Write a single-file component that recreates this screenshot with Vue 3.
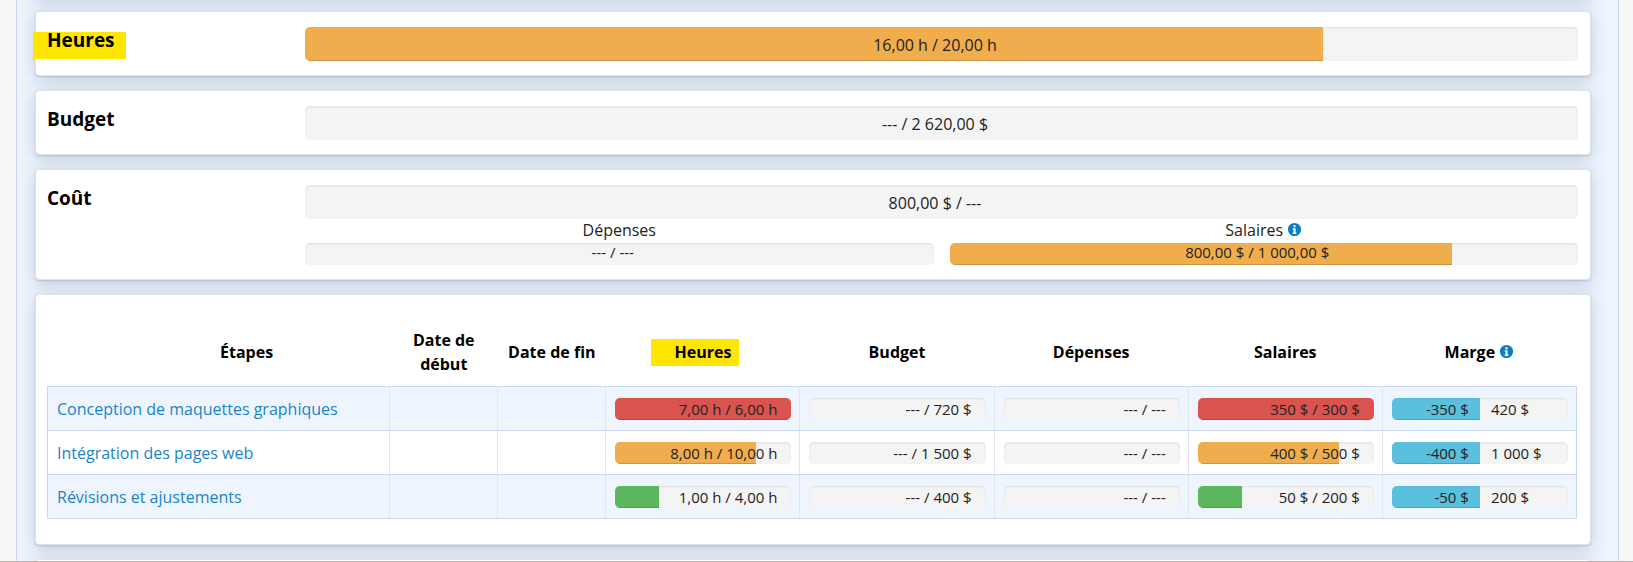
<template>
  <div class="page">
    <div class="content">
      <section class="card prev-card"></section>

      <section class="card summary">
        <span class="mark mark-title"></span>
        <h2>Heures</h2>
        <div class="summary-body">
          <div class="bar big">
            <div class="fill warning" style="width: 80%"></div>
            <span class="bar-label">16,00 h / 20,00 h</span>
          </div>
        </div>
      </section>

      <section class="card summary">
        <h2>Budget</h2>
        <div class="summary-body">
          <div class="bar big"><span class="bar-label">--- / 2 620,00 $</span></div>
        </div>
      </section>

      <section class="card summary">
        <h2>Coût</h2>
        <div class="summary-body">
          <div class="bar big"><span class="bar-label">800,00 $ / ---</span></div>
          <div class="split">
            <div>
              <div class="split-title">Dépenses</div>
              <div class="bar small"><span class="bar-label">--- / ---</span></div>
            </div>
            <div>
              <div class="split-title">
                Salaires
                <svg class="info" viewBox="0 0 16 16"><use href="#info-circle" /></svg>
              </div>
              <div class="bar small">
                <div class="fill warning" style="width: 80%"></div>
                <span class="bar-label">800,00 $ / 1 000,00 $</span>
              </div>
            </div>
          </div>
        </div>
      </section>

      <section class="card table-card">
        <span class="mark mark-head"></span>
        <table>
          <colgroup>
            <col style="width: 342px" />
            <col style="width: 108px" />
            <col style="width: 108px" />
            <col v-for="n in 5" :key="n" style="width: 194px" />
          </colgroup>
          <thead>
            <tr>
              <th class="th-name">Étapes</th>
              <th>Date de début</th>
              <th class="th-tight">Date de fin</th>
              <th>Heures</th>
              <th>Budget</th>
              <th>Dépenses</th>
              <th>Salaires</th>
              <th>
                Marge
                <svg class="info" viewBox="0 0 16 16"><use href="#info-circle" /></svg>
              </th>
            </tr>
          </thead>
          <tbody>
            <tr v-for="row in rows" :key="row.name">
              <td class="name"><a href="#">{{ row.name }}</a></td>
              <td></td>
              <td></td>
              <td v-for="cell in row.cells" :key="cell.label">
                <div class="bar cell">
                  <div v-if="cell.pct" class="fill" :class="cell.tone" :style="{ width: cell.pct + '%' }"></div>
                  <span class="bar-label right">{{ cell.label }}</span>
                </div>
              </td>
              <td>
                <div class="bar cell margin">
                  <div class="fill info-fill"></div>
                  <span class="bar-label used">{{ row.used }}</span>
                  <span class="bar-label left">{{ row.left }}</span>
                </div>
              </td>
            </tr>
          </tbody>
        </table>
      </section>

      <section class="card next-card"></section>
    </div>

    <svg class="defs" width="0" height="0">
      <symbol id="info-circle" viewBox="0 0 16 16">
        <path
          fill-rule="evenodd"
          d="M8 1a7 7 0 1 0 0 14A7 7 0 0 0 8 1zM6.900 3.400h2.200v2.100H6.900zM6.100 6.600h3v4.600h.9v1.500H6.100v-1.500H7V8.100h-.9z"
        />
      </symbol>
    </svg>
  </div>
</template>

<script setup>
const rows = [
  {
    name: 'Conception de maquettes graphiques',
    cells: [
      { label: '7,00 h / 6,00 h', pct: 100, tone: 'danger' },
      { label: '--- / 720 $' },
      { label: '--- / ---' },
      { label: '350 $ / 300 $', pct: 100, tone: 'danger' },
    ],
    used: '-350 $',
    left: '420 $',
  },
  {
    name: 'Intégration des pages web',
    cells: [
      { label: '8,00 h / 10,00 h', pct: 80, tone: 'warning' },
      { label: '--- / 1 500 $' },
      { label: '--- / ---' },
      { label: '400 $ / 500 $', pct: 80, tone: 'warning' },
    ],
    used: '-400 $',
    left: '1 000 $',
  },
  {
    name: 'Révisions et ajustements',
    cells: [
      { label: '1,00 h / 4,00 h', pct: 25, tone: 'success' },
      { label: '--- / 400 $' },
      { label: '--- / ---' },
      { label: '50 $ / 200 $', pct: 25, tone: 'success' },
    ],
    used: '-50 $',
    left: '200 $',
  },
]
</script>

<style>
html, body { margin: 0; height: 562px; overflow: hidden; background: #f7f7f7; }
</style>

<style scoped>
.page { height: 562px; box-sizing: border-box; overflow: hidden; background: #f7f7f7; border-bottom: 1px solid #bdb9ad; font-family: "Open Sans", "DejaVu Sans", sans-serif; color: #111; }
.content { margin: 0 14px 0 16px; height: 562px; box-sizing: border-box; padding: 0 27px 0 18px; background: #eef5fe; border-left: 1px solid #c5d4f7; border-right: 1px solid #c5d4f7; overflow: hidden; }
.defs { position: absolute; }

.card { position: relative; background: #fff; border: 1px solid #dfe3ea; border-radius: 4px; box-shadow: 0 1px 2px rgba(60, 70, 100, 0.2), 0 4px 18px rgba(60, 75, 115, 0.24); box-sizing: border-box; margin-bottom: 14px; }
.prev-card { height: 40px; margin-top: -43px; }
.next-card { height: 40px; }

.summary { display: flex; padding: 15px 12px 14px 11px; min-height: 65px; }
.summary h2 { width: 258px; flex: none; margin: 0; font-size: 19px; line-height: 26px; font-weight: 700; color: #000; position: relative; }
.summary-body { flex: 1; min-width: 0; }

.bar { position: relative; background: #f4f4f4; border-radius: 5px; overflow: hidden; box-shadow: inset 0 1px 2px rgba(0, 0, 0, 0.09); }
.big { height: 34px; }
.small { height: 22px; }
.cell { height: 22px; }
.fill { position: absolute; left: 0; top: 0; bottom: 0; box-shadow: inset 0 -1px 0 rgba(0, 0, 0, 0.15); }
.warning { background: #f0ad4e; }
.danger { background: #d9534f; }
.success { background: #5cb85c; }
.info-fill { background: #5bc0de; width: 50%; }

.bar-label { position: absolute; left: 0; right: 0; top: 0; text-align: center; font-size: 15px; color: #222; white-space: nowrap; }
.big .bar-label { font-size: 16px; line-height: 36px; padding-right: 13px; }
.small .bar-label { line-height: 18px; padding-right: 13px; }
.cell .bar-label { line-height: 23px; }
.cell .right { right: 14px; text-align: right; }
.margin .used { right: 50%; padding-right: 11px; text-align: right; }
.margin .left { left: 50%; padding-left: 11px; text-align: left; }

.split { display: grid; grid-template-columns: 1fr 1fr; column-gap: 16px; }
.split-title { text-align: center; font-size: 16px; line-height: 22px; margin-bottom: 2px; color: #222; padding-right: 0; }
.info { width: 15px; height: 15px; fill: #0a7cc4; vertical-align: -1px; }

.table-card { height: 251px; padding: 33px 12px 0 11px; }
table { position: relative; border-collapse: collapse; table-layout: fixed; width: 1530px; }
th { height: 58px; box-sizing: border-box; padding: 0 8px 10px; font-size: 16px; line-height: 24px; font-weight: 700; color: #000; text-align: center; vertical-align: middle; }
.th-name { padding-left: 64px; }
.th-tight { padding: 0 0 10px; }
td { height: 44px; box-sizing: border-box; padding: 0 8px 0 9px; border: 1px solid #e1e7f0; border-top: 1px solid #c9d7f8; border-bottom: 1px solid #c9d7f8; vertical-align: middle; }
td:first-child { border-left-color: #c9d7f8; }
td:last-child { border-right-color: #c9d7f8; }
tbody tr:nth-child(odd) td { background: #eef5fe; }
.name a { color: #1a84c6; text-decoration: none; font-size: 16px; }

.mark { position: absolute; background: #ffe600; }
.mark-title { left: -3px; top: 20px; width: 93px; height: 27px; }
.mark-head { left: 615px; top: 44px; width: 88px; height: 27px; }
</style>
